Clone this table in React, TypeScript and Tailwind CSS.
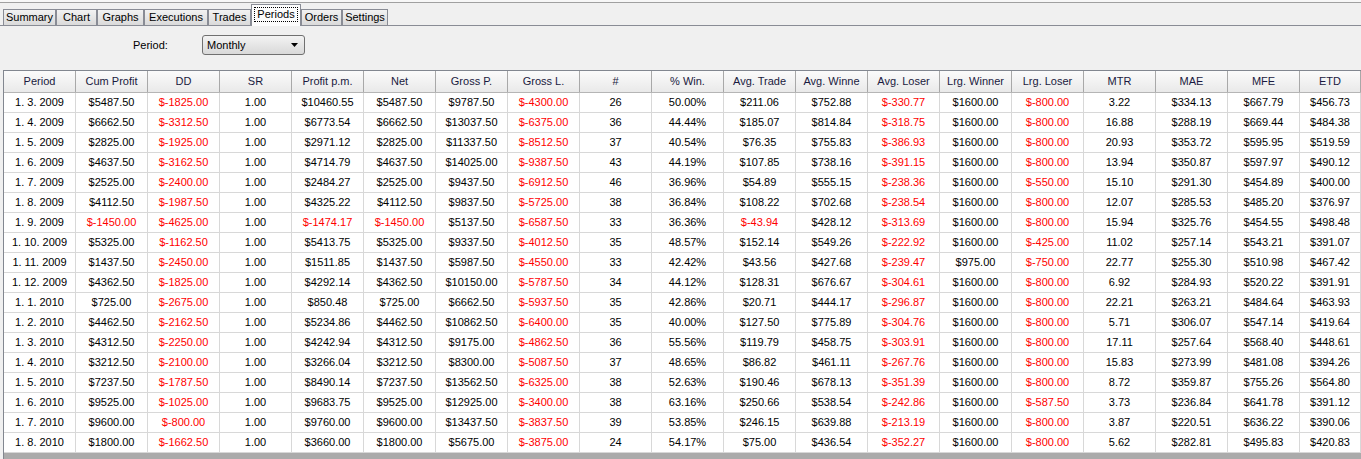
import React from 'react';

const columns = [
    'Period', 'Cum Profit', 'DD', 'SR', 'Profit p.m.', 'Net', 'Gross P.', 'Gross L.', '#', '% Win.',
    'Avg. Trade', 'Avg. Winne', 'Avg. Loser', 'Lrg. Winner', 'Lrg. Loser', 'MTR', 'MAE', 'MFE', 'ETD',
];

const rows: string[][] = [
    ['1. 3. 2009', '$5487.50', '$-1825.00', '1.00', '$10460.55', '$5487.50', '$9787.50', '$-4300.00', '26', '50.00%', '$211.06', '$752.88', '$-330.77', '$1600.00', '$-800.00', '3.22', '$334.13', '$667.79', '$456.73'],
    ['1. 4. 2009', '$6662.50', '$-3312.50', '1.00', '$6773.54', '$6662.50', '$13037.50', '$-6375.00', '36', '44.44%', '$185.07', '$814.84', '$-318.75', '$1600.00', '$-800.00', '16.88', '$288.19', '$669.44', '$484.38'],
    ['1. 5. 2009', '$2825.00', '$-1925.00', '1.00', '$2971.12', '$2825.00', '$11337.50', '$-8512.50', '37', '40.54%', '$76.35', '$755.83', '$-386.93', '$1600.00', '$-800.00', '20.93', '$353.72', '$595.95', '$519.59'],
    ['1. 6. 2009', '$4637.50', '$-3162.50', '1.00', '$4714.79', '$4637.50', '$14025.00', '$-9387.50', '43', '44.19%', '$107.85', '$738.16', '$-391.15', '$1600.00', '$-800.00', '13.94', '$350.87', '$597.97', '$490.12'],
    ['1. 7. 2009', '$2525.00', '$-2400.00', '1.00', '$2484.27', '$2525.00', '$9437.50', '$-6912.50', '46', '36.96%', '$54.89', '$555.15', '$-238.36', '$1600.00', '$-550.00', '15.10', '$291.30', '$454.89', '$400.00'],
    ['1. 8. 2009', '$4112.50', '$-1987.50', '1.00', '$4325.22', '$4112.50', '$9837.50', '$-5725.00', '38', '36.84%', '$108.22', '$702.68', '$-238.54', '$1600.00', '$-800.00', '12.07', '$285.53', '$485.20', '$376.97'],
    ['1. 9. 2009', '$-1450.00', '$-4625.00', '1.00', '$-1474.17', '$-1450.00', '$5137.50', '$-6587.50', '33', '36.36%', '$-43.94', '$428.12', '$-313.69', '$1600.00', '$-800.00', '15.94', '$325.76', '$454.55', '$498.48'],
    ['1. 10. 2009', '$5325.00', '$-1162.50', '1.00', '$5413.75', '$5325.00', '$9337.50', '$-4012.50', '35', '48.57%', '$152.14', '$549.26', '$-222.92', '$1600.00', '$-425.00', '11.02', '$257.14', '$543.21', '$391.07'],
    ['1. 11. 2009', '$1437.50', '$-2450.00', '1.00', '$1511.85', '$1437.50', '$5987.50', '$-4550.00', '33', '42.42%', '$43.56', '$427.68', '$-239.47', '$975.00', '$-750.00', '22.77', '$255.30', '$510.98', '$467.42'],
    ['1. 12. 2009', '$4362.50', '$-1825.00', '1.00', '$4292.14', '$4362.50', '$10150.00', '$-5787.50', '34', '44.12%', '$128.31', '$676.67', '$-304.61', '$1600.00', '$-800.00', '6.92', '$284.93', '$520.22', '$391.91'],
    ['1. 1. 2010', '$725.00', '$-2675.00', '1.00', '$850.48', '$725.00', '$6662.50', '$-5937.50', '35', '42.86%', '$20.71', '$444.17', '$-296.87', '$1600.00', '$-800.00', '22.21', '$263.21', '$484.64', '$463.93'],
    ['1. 2. 2010', '$4462.50', '$-2162.50', '1.00', '$5234.86', '$4462.50', '$10862.50', '$-6400.00', '35', '40.00%', '$127.50', '$775.89', '$-304.76', '$1600.00', '$-800.00', '5.71', '$306.07', '$547.14', '$419.64'],
    ['1. 3. 2010', '$4312.50', '$-2250.00', '1.00', '$4242.94', '$4312.50', '$9175.00', '$-4862.50', '36', '55.56%', '$119.79', '$458.75', '$-303.91', '$1600.00', '$-800.00', '17.11', '$257.64', '$568.40', '$448.61'],
    ['1. 4. 2010', '$3212.50', '$-2100.00', '1.00', '$3266.04', '$3212.50', '$8300.00', '$-5087.50', '37', '48.65%', '$86.82', '$461.11', '$-267.76', '$1600.00', '$-800.00', '15.83', '$273.99', '$481.08', '$394.26'],
    ['1. 5. 2010', '$7237.50', '$-1787.50', '1.00', '$8490.14', '$7237.50', '$13562.50', '$-6325.00', '38', '52.63%', '$190.46', '$678.13', '$-351.39', '$1600.00', '$-800.00', '8.72', '$359.87', '$755.26', '$564.80'],
    ['1. 6. 2010', '$9525.00', '$-1025.00', '1.00', '$9683.75', '$9525.00', '$12925.00', '$-3400.00', '38', '63.16%', '$250.66', '$538.54', '$-242.86', '$1600.00', '$-587.50', '3.73', '$236.84', '$641.78', '$391.12'],
    ['1. 7. 2010', '$9600.00', '$-800.00', '1.00', '$9760.00', '$9600.00', '$13437.50', '$-3837.50', '39', '53.85%', '$246.15', '$639.88', '$-213.19', '$1600.00', '$-800.00', '3.87', '$220.51', '$636.22', '$390.06'],
    ['1. 8. 2010', '$1800.00', '$-1662.50', '1.00', '$3660.00', '$1800.00', '$5675.00', '$-3875.00', '24', '54.17%', '$75.00', '$436.54', '$-352.27', '$1600.00', '$-800.00', '5.62', '$282.81', '$495.83', '$420.83'],
];

const tabs = [
    { name: 'Summary', w: 'w-[53px]' },
    { name: 'Chart', w: 'w-[41px]' },
    { name: 'Graphs', w: 'w-[47px]' },
    { name: 'Executions', w: 'w-[64px]' },
    { name: 'Trades', w: 'w-[43px]' },
    { name: 'Periods', w: 'w-[50px]', active: true },
    { name: 'Orders', w: 'w-[41px]' },
    { name: 'Settings', w: 'w-[46px]' },
];

export default function App() {
    return (
        <div
            className="flex h-[459px] w-[1361px] flex-col overflow-hidden bg-[#f0f0f0] text-[11px] text-black"
            style={{ fontFamily: '"Liberation Sans", Arial, sans-serif' }}
        >
            {/* Tab strip */}
            <div className="h-[2px] bg-[#f7f7f7]" />
            <div className="h-px bg-[#a0a0a0]" />
            <div className="flex h-[23px] items-end border-b border-[#898c95] pl-[3px]">
                {tabs.map((t) =>
                    t.active ? (
                        <div
                            key={t.name}
                            className={`${t.w} -mb-px flex h-[22px] items-center justify-center border border-b-0 border-[#898c95] bg-[#fcfcfc] pb-[3px]`}
                        >
                            <span className="px-[2px] leading-[13px] outline outline-1 outline-dotted outline-black">{t.name}</span>
                        </div>
                    ) : (
                        <div
                            key={t.name}
                            className={`${t.w} flex h-[16px] items-center justify-center border border-b-0 border-[#898c95] bg-linear-to-b from-[#f2f2f2] to-[#dadada] pb-px`}
                        >
                            {t.name}
                        </div>
                    ),
                )}
            </div>

            {/* Period selector */}
            <div className="flex h-[20px] items-center pt-0 mt-[9px]">
                <span className="ml-[133px] w-[69px]">Period:</span>
                <div className="flex h-[20px] w-[103px] items-center justify-between rounded-[3px] border border-[#707070] bg-linear-to-b from-[#f3f3f3] to-[#d9d9d9] pl-[4px] pr-[6px]">
                    <span>Monthly</span>
                    <svg width="7" height="4" viewBox="0 0 7 4">
                        <path d="M0 0 H7 L3.5 4 Z" fill="#000" />
                    </svg>
                </div>
            </div>

            {/* Grid */}
            <div className="mt-[15px] ml-[3px] flex flex-1 flex-col border-t border-l border-[#828790] bg-white">
                <div className="flex h-[22px] border-b border-[#b5b5b5] bg-linear-to-b from-[#fbfbfb] to-[#e9e9e9]">
                    {columns.map((c, i) => (
                        <div
                            key={c}
                            className={`${i === columns.length - 1 ? 'flex-1' : 'w-[72px] shrink-0'} flex items-center justify-center overflow-hidden whitespace-nowrap border-r border-[#a8a8a8] text-[#1a1a40]`}
                        >
                            {c}
                        </div>
                    ))}
                </div>
                {rows.map((r) => (
                    <div key={r[0]} className="flex h-[20px] border-b border-[#d8d8d8]">
                        {r.map((v, i) => (
                            <div
                                key={i}
                                className={`${i === r.length - 1 ? 'flex-1' : 'w-[72px] shrink-0'} flex items-center justify-center overflow-hidden whitespace-nowrap border-r border-[#d8d8d8] ${v.startsWith('$-') ? 'text-[#ff0000]' : 'text-black'}`}
                            >
                                {v}
                            </div>
                        ))}
                    </div>
                ))}
                <div className="flex-1 bg-[#ababab]" />
            </div>
        </div>
    );
}
